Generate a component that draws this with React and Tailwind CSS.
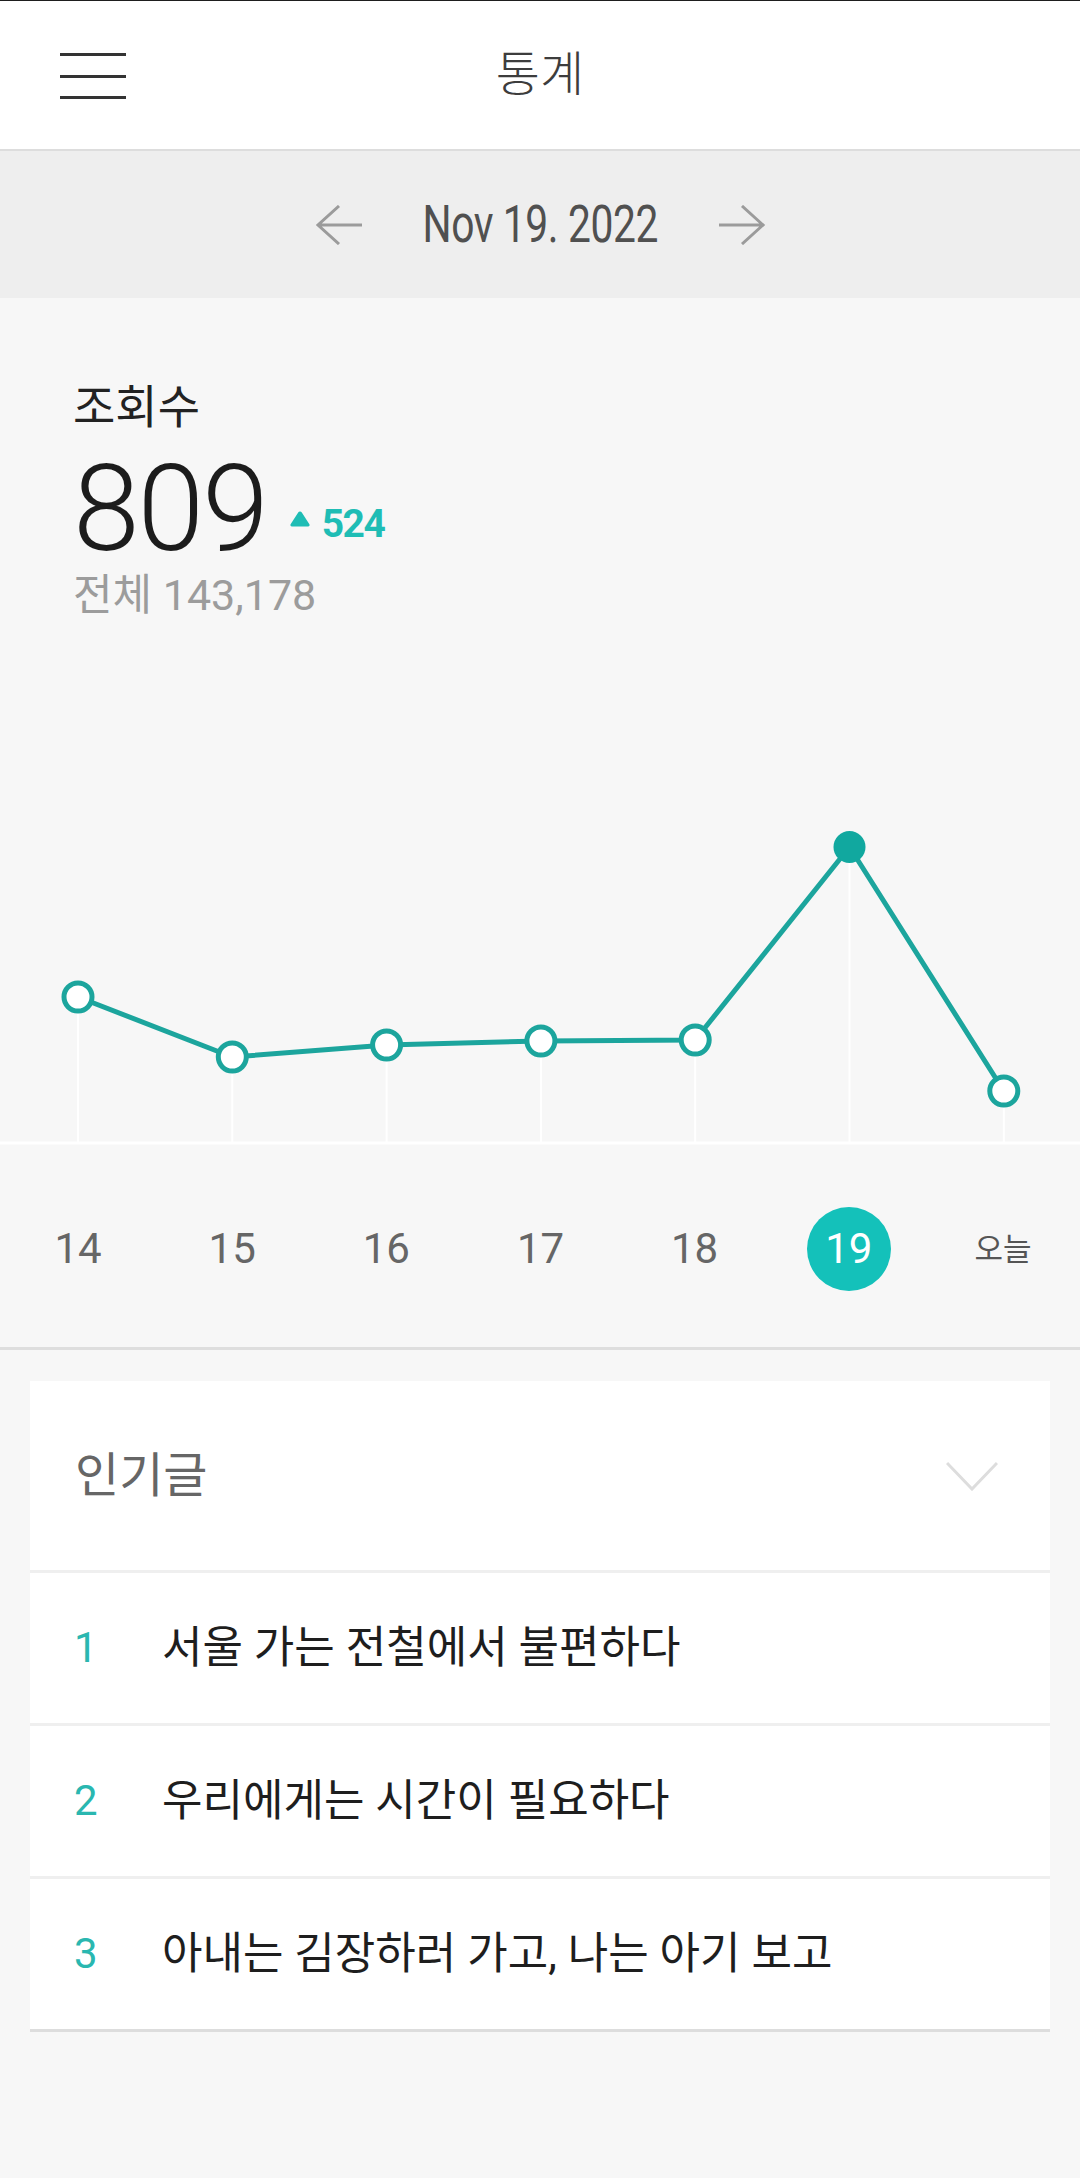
import React from 'react';

const days = ['14', '15', '16', '17', '18', '19', '오늘'];
const points = [197, 257, 245, 241, 240, 47, 291];
const selected = 5;

const popular = [
  '서울 가는 전철에서 불편하다',
  '우리에게는 시간이 필요하다',
  '아내는 김장하러 가고, 나는 아기 보고',
];

const xAt = (i) => 78 + i * 154.3;

const Chart = () => {
  const line = points.map((y, i) => `${xAt(i)},${y}`).join(' ');
  return (
    <svg width="1080" height="346" viewBox="0 0 1080 346" className="block">
      {points.map((y, i) => (
        <line key={i} x1={xAt(i)} y1={y} x2={xAt(i)} y2="343" stroke="#ffffff" strokeWidth="2" />
      ))}
      <line x1="0" y1="343" x2="1080" y2="343" stroke="#ffffff" strokeWidth="3" />
      <polyline points={line} fill="none" stroke="#1ca59d" strokeWidth="5" strokeLinejoin="round" />
      {points.map((y, i) =>
        i === selected ? (
          <circle key={i} cx={xAt(i)} cy={y} r="16" fill="#11a89f" />
        ) : (
          <circle key={i} cx={xAt(i)} cy={y} r="14" fill="#ffffff" stroke="#1ca59d" strokeWidth="5" />
        )
      )}
    </svg>
  );
};

export default function App() {
  return (
    <div className="min-h-[2178px] w-full bg-[#f7f7f7] font-['Roboto','Noto_Sans_CJK_KR',sans-serif]">
      <div className="h-px bg-[#1e1e1e]" />

      {/* header */}
      <div className="grid h-[150px] grid-cols-[1fr_auto_1fr] items-center border-b-2 border-[#dddddd] bg-white">
        <div className="flex flex-col gap-[18.5px] pl-[60px] pt-[2px]">
          <span className="block h-[3px] w-[66px] bg-[#333333]" />
          <span className="block h-[3px] w-[66px] bg-[#333333]" />
          <span className="block h-[3px] w-[66px] bg-[#333333]" />
        </div>
        <h1 className="text-[48px] font-light leading-none text-[#3d3d3d]">통계</h1>
        <div />
      </div>

      {/* date bar */}
      <div className="flex h-[147px] items-center justify-center gap-[60px] bg-[#eeeeee]">
        <svg width="48" height="40" viewBox="0 0 48 40" fill="none" stroke="#9b9b9b" strokeWidth="3">
          <path d="M47 20H3M24 1L3 20l21 19" />
        </svg>
        <div className="flex w-[235px] justify-center">
          <span className="scale-x-[0.8] whitespace-nowrap text-[51px] leading-none tracking-[-0.5px] text-[#505050]">
            Nov 19. 2022
          </span>
        </div>
        <svg width="48" height="40" viewBox="0 0 48 40" fill="none" stroke="#9b9b9b" strokeWidth="3">
          <path d="M1 20h44M24 1l21 19-21 19" />
        </svg>
      </div>

      {/* stats */}
      <div className="border-b-[3px] border-[#dedede]">
        <div className="pl-[73px] pt-[82px]">
          <p className="text-[46px] leading-[54px] text-[#222222]">조회수</p>
          <div className="mt-[25px] flex items-end">
            <span className="text-[120px] font-light leading-[100px] tracking-[-2px] text-[#1c1c1c]">809</span>
            <div className="mb-[16px] ml-[22px] flex items-start gap-[11px]">
              <svg width="22" height="17" viewBox="0 0 22 17" className="mt-[5px]">
                <path d="M11 1.5c.8 0 1.4.5 1.8 1.1l7.6 11.6c.6 1-.1 2.3-1.3 2.3H2.9c-1.2 0-1.9-1.3-1.3-2.3L9.2 2.6c.4-.6 1-1.1 1.8-1.1z" fill="#1fbdb5" />
              </svg>
              <span className="text-[39px] font-bold leading-[38px] tracking-[-1.5px] text-[#1fbdb5]">524</span>
            </div>
          </div>
          <p className="mt-[12px] text-[43px] leading-[48px] text-[#9c9c9c]">전체 143,178</p>
        </div>

        <div className="mt-[181px]">
          <Chart />
        </div>

        <div className="grid h-[201px] grid-cols-7 items-center pl-[1px] pt-[5px]">
          {days.map((d, i) =>
            i === selected ? (
              <div key={d} className="flex justify-center">
                <span className="flex h-[84px] w-[84px] items-center justify-center rounded-full bg-[#14c1ba] text-[42px] leading-none text-white">
                  {d}
                </span>
              </div>
            ) : (
              <div
                key={d}
                className={
                  d === '오늘'
                    ? 'text-center text-[31px] leading-none text-[#555555]'
                    : 'text-center text-[42px] leading-none text-[#666666]'
                }
              >
                {d}
              </div>
            )
          )}
        </div>
      </div>

      {/* popular posts */}
      <div className="mx-[30px] mt-[31px] border-b-[3px] border-[#dddddd] bg-white">
        <div className="flex h-[192px] items-center justify-between border-b-[3px] border-[#efefef] pl-[45px] pr-[52px]">
          <h2 className="text-[48px] leading-none text-[#666666]">인기글</h2>
          <svg width="52" height="30" viewBox="0 0 52 30" fill="none" stroke="#dddddd" strokeWidth="3">
            <path d="M1 2l25 26L51 2" />
          </svg>
        </div>
        {popular.map((title, i) => (
          <div
            key={title}
            className={
              i < popular.length - 1
                ? 'flex h-[153px] items-center border-b-[3px] border-[#efefef] pl-[44px]'
                : 'flex h-[150px] items-center pl-[44px]'
            }
          >
            <span className="w-[88px] text-[42px] leading-none text-[#2ab7b0]">{i + 1}</span>
            <span className="text-[44px] leading-none text-[#1e1e1e]">{title}</span>
          </div>
        ))}
      </div>
    </div>
  );
}
